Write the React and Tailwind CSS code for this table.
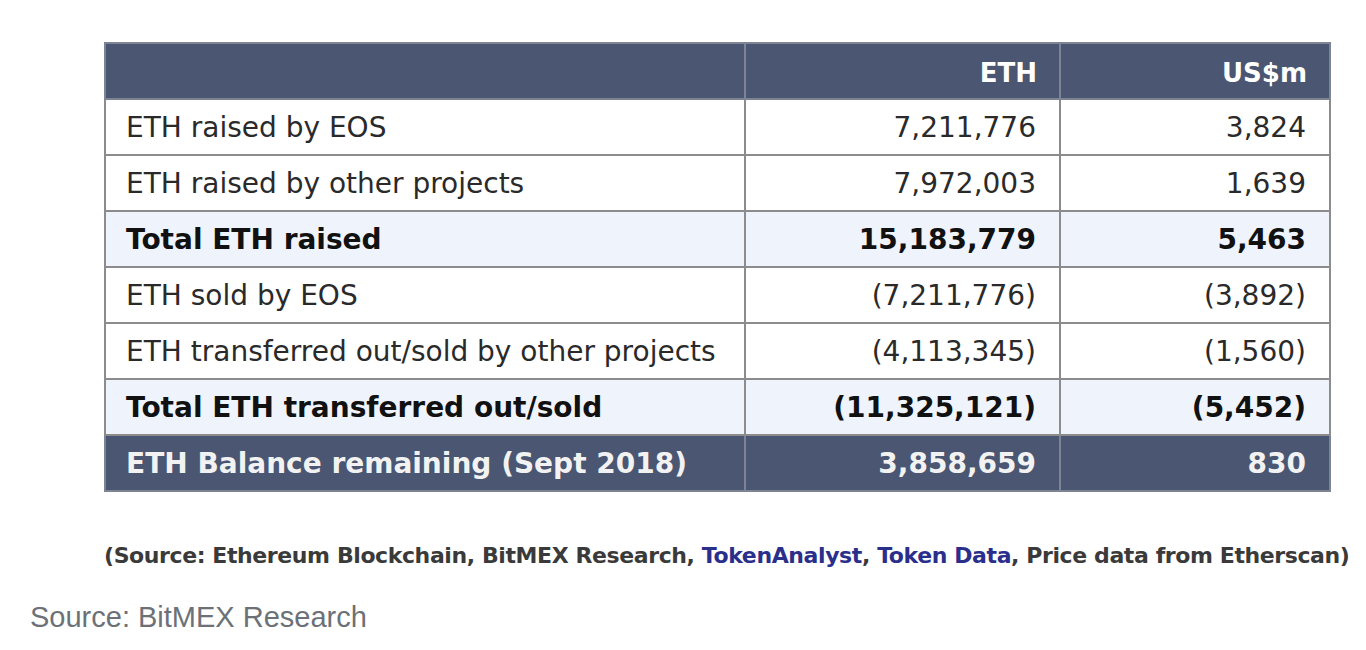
import React from 'react';

const rows = [
  { label: 'ETH raised by EOS', eth: '7,211,776', usd: '3,824' },
  { label: 'ETH raised by other projects', eth: '7,972,003', usd: '1,639' },
  { label: 'Total ETH raised', eth: '15,183,779', usd: '5,463', total: true },
  { label: 'ETH sold by EOS', eth: '(7,211,776)', usd: '(3,892)' },
  { label: 'ETH transferred out/sold by other projects', eth: '(4,113,345)', usd: '(1,560)' },
  { label: 'Total ETH transferred out/sold', eth: '(11,325,121)', usd: '(5,452)', total: true },
];

const App = () => {
  return (
    <div className="w-[1366px] h-[650px] bg-white overflow-hidden font-['DejaVu_Sans',Verdana,sans-serif]">
      {/* Table */}
      <div className="pt-[42px] pl-[104px]">
        <table className="w-[1225px] table-fixed border-collapse text-[28px] leading-none">
          <colgroup>
            <col className="w-[640px]" />
            <col className="w-[315px]" />
            <col className="w-[270px]" />
          </colgroup>
          <thead>
            <tr className="h-[56px] bg-[#4a5672] text-white font-bold">
              <th className="border-2 border-[#7d8494]"></th>
              <th className="border-2 border-[#7d8494] text-right pr-[22px] pt-[4px] text-[26px]">ETH</th>
              <th className="border-2 border-[#7d8494] text-right pr-[22px] pt-[4px] text-[26px]">US$m</th>
            </tr>
          </thead>
          <tbody>
            {rows.map((r) => (
              <tr
                key={r.label}
                className={`h-[56px] ${r.total ? 'bg-[#eef3fc] font-bold text-[#111]' : 'bg-white text-[#2a2a2a]'}`}
              >
                <td className="border-2 border-[#8c8c8c] pl-[20px] pt-[2px]">{r.label}</td>
                <td className="border-2 border-[#8c8c8c] text-right pr-[23px] pt-[2px]">{r.eth}</td>
                <td className="border-2 border-[#8c8c8c] text-right pr-[23px] pt-[2px]">{r.usd}</td>
              </tr>
            ))}
            <tr className="h-[56px] bg-[#4a5672] text-[#f2f2f2] font-bold">
              <td className="border-2 border-[#7d8494] pl-[20px] pt-[2px]">ETH Balance remaining (Sept 2018)</td>
              <td className="border-2 border-[#7d8494] text-right pr-[23px] pt-[2px]">3,858,659</td>
              <td className="border-2 border-[#7d8494] text-right pr-[23px] pt-[2px]">830</td>
            </tr>
          </tbody>
        </table>
      </div>

      {/* Footnote */}
      <p className="mt-[47px] ml-[104px] text-[22px] font-bold text-[#3a3a3a] tracking-[-0.4px] whitespace-nowrap">
        (Source: Ethereum Blockchain, BitMEX Research,{' '}
        <span className="text-[#2b2f8c]">TokenAnalyst</span>,{' '}
        <span className="text-[#2b2f8c]">Token Data</span>, Price data from Etherscan)
      </p>

      {/* Caption */}
      <p className="mt-[24px] ml-[30px] text-[29px] text-[#6c7178] font-['Liberation_Sans',Arial,sans-serif]">
        Source: BitMEX Research
      </p>
    </div>
  );
};

export default App;
